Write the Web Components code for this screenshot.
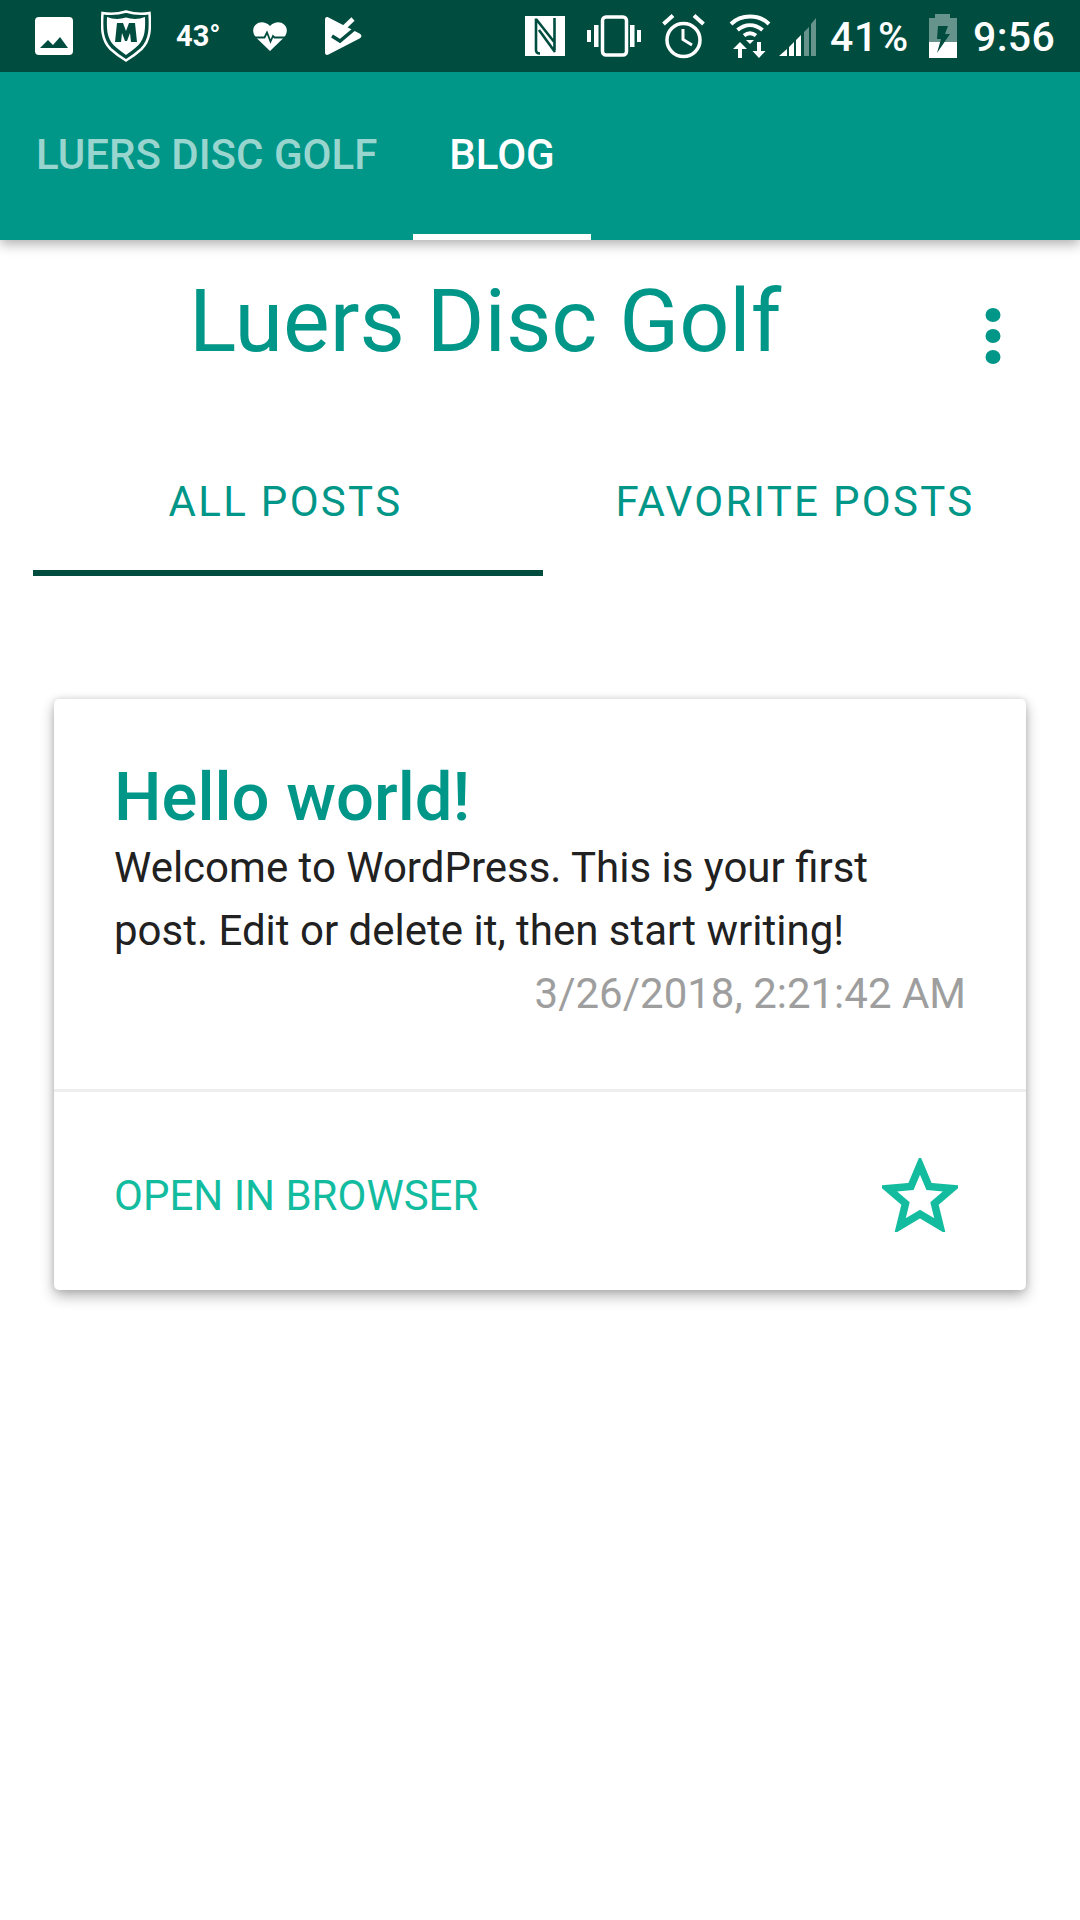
<!DOCTYPE html>
<html><head><meta charset="utf-8">
<style>
html,body{margin:0;padding:0;background:#fff;font-family:Roboto,sans-serif}
body{width:1080px;height:1920px;overflow:hidden;display:flex;flex-direction:column}
</style></head>
<body>
<status-bar></status-bar>
<app-toolbar><toolbar-tab>LUERS DISC GOLF</toolbar-tab><toolbar-tab active>BLOG</toolbar-tab></app-toolbar>
<page-header>Luers Disc Golf</page-header>
<post-tabs><post-tab active>ALL POSTS</post-tab><post-tab>FAVORITE POSTS</post-tab></post-tabs>
<post-card title-text="Hello world!" date="3/26/2018, 2:21:42 AM">Welcome to WordPress. This is your first post. Edit or delete it, then start writing!</post-card>
<script>
function def(name, html){
  customElements.define(name, class extends HTMLElement{
    constructor(){super();this.attachShadow({mode:'open'}).innerHTML=typeof html==='function'?html(this):html;}
  });
}
def('status-bar',`<style>
:host{display:flex;align-items:center;height:72px;background:#004d40;color:#fff;flex:none;font-family:Roboto,sans-serif;position:relative;z-index:2}
svg{display:block;flex:none}
span{display:block;flex:none;line-height:1}
.t1{font-size:29px;font-weight:700;margin-left:25px;width:45px;white-space:nowrap}
.t2{font-size:41px;font-weight:500;margin-left:14px;width:76px;white-space:nowrap;letter-spacing:.6px;padding-top:3px}
.t3{font-size:41px;font-weight:500;margin-left:16px;white-space:nowrap;letter-spacing:.3px;padding-top:3px}
</style>
<svg style="margin-left:35px" width="38" height="38" viewBox="0 0 38 38"><rect width="38" height="38" rx="4" fill="#fff"/><path d="M5 31 13 23l5 5 7-8 8 11z" fill="#004d40"/></svg>
<svg style="margin-left:28px" width="50" height="52" viewBox="0 0 50 52"><path d="M25 1.500C33 4 41 4.500 48.500 3c1 15 1 27-8 36C35 44 30 47.500 25 50.500 20 47.500 15 44 9.500 39c-9-9-9-21-8-36C9 4.500 17 4 25 1.500z" fill="none" stroke="#fff" stroke-width="2.500"/><path d="M25 7.500c6 2 13 2 19-.5 .5 12 0 21-6.500 28C33 39.500 29 42 25 45c-4-3-8-5.500-12.500-10C6 28 5.500 19 6 7c6 2.500 13 2.500 19 .5z" fill="#fff"/><path d="M14 32 16 13h6l3 8 3-8h6l2 19h-6l-1-9-3 8h-2l-3-8-1 9z" fill="#004d40"/></svg>
<span class="t1">43°</span>
<svg style="margin-left:32px" width="34" height="29" viewBox="0 0 34 29"><path d="M17 29 3 15.500C-1 11-.5 5 3 2.500 7-1 13 0 17 4c4-4 10-5 14-1.500 3.500 2.500 4 8.500 0 13z" fill="#fff"/><path d="M0 15.500h11.500l2.500-5 3.500 9 2.500-5.500 1.500 1.500h12.500" fill="none" stroke="#004d40" stroke-width="1.800"/></svg>
<svg style="margin-left:38px" width="37" height="38" viewBox="0 0 37 38"><path d="M0 2.500C0 .5 1.500-.5 3.500.5L34.500 16.500c2.500 1.300 2.500 3.700 0 5L3.500 37.500C1.500 38.500 0 37.500 0 35.500z" fill="#fff"/><path d="M17 12.500 28 2" fill="none" stroke="#fff" stroke-width="4.500"/><path d="M7 19l8 5L30 11.500" fill="none" stroke="#004d40" stroke-width="3.500"/></svg>
<span style="flex:1"></span>
<svg width="40" height="40" viewBox="0 0 40 40"><rect width="40" height="40" fill="#fff"/><path d="M11 2.500V34c0 2.500 1.500 3.500 4 3.500M11 3 30 27M29.500 2V34M14 14 30 36" fill="none" stroke="#004d40" stroke-width="2.600"/></svg>
<svg style="margin-left:22px" width="54" height="42" viewBox="0 0 54 42"><rect x="15.500" y="2" width="24" height="38" rx="3.500" fill="none" stroke="#fff" stroke-width="3.500"/><path d="M7 10h4.500v22H7zM0 15h4v12H0zM43 10h4.500v22H43zM50 15h4v12h-4z" fill="#fff"/></svg>
<svg style="margin-left:21px" width="43" height="46" viewBox="0 0 43 46"><circle cx="21.500" cy="27" r="16.500" fill="none" stroke="#fff" stroke-width="3.500"/><path d="M21 16v10.500l9 5.500" fill="none" stroke="#fff" stroke-width="3"/><path d="M1.500 11 11 2.500M41.500 11 32 2.500" stroke="#fff" stroke-width="4"/></svg>
<svg style="margin-left:24px" width="42" height="44" viewBox="0 0 42 44"><path d="M2 10C12 0 30 0 40 10M8.500 16c8-6.500 17-6.500 25 0M15 21.500c4-3 8-3 12 0" fill="none" stroke="#fff" stroke-width="4"/><path d="M17 26h8l-4 4z" fill="#fff"/><path d="M11 28l7 7h-5v9H9v-9H4zM30 44l-6.500-7H28v-9h4v9h4.500z" fill="#fff"/></svg>
<svg style="margin-left:8px" width="37" height="39" viewBox="0 0 37 39"><path d="M0 39 8 32v7zM10 30l5-5v14h-5zM17 23l5-5v21h-5z" fill="#fff"/><path d="M25 15l5-5v29h-5zM32 7l5-6v38h-5z" fill="#fff" opacity=".4"/></svg>
<span class="t2">41%</span>
<svg style="margin-left:23px" width="28" height="44" viewBox="0 0 28 44"><path d="M6 0h15v4h7v24H0V4h6z" fill="#fff" opacity=".4"/><path d="M0 28h28v16H0z" fill="#fff"/><path d="M9 12h10l-3 8h5L8 39l4-14H8z" fill="#004d40"/></svg>
<span class="t3" style="margin-right:25px">9:56</span>`);

def('toolbar-tab',`<style>
:host{display:flex;align-items:center;height:168px;padding:0 36px 4px;box-sizing:border-box;font:500 42px Roboto,sans-serif;color:#99d5cf;white-space:nowrap;position:relative}
:host([active]){color:#fff}
:host([active])::after{content:"";position:absolute;left:0;right:0;bottom:0;height:6px;background:#fff}
</style><slot></slot>`);
def('app-toolbar',`<style>
:host{display:flex;height:168px;flex:none;background:#009688;box-shadow:0 4px 12px rgba(0,0,0,.32);position:relative;z-index:1}
</style><slot></slot>`);
def('page-header',`<style>
:host{display:flex;flex:none;height:174px;font:400 88px Roboto,sans-serif;color:#009688;align-items:flex-start}
.t{margin-left:189px;line-height:108px;padding-top:27px;white-space:nowrap;flex:1}
svg{display:block;margin:68px 79px 0 0;flex:none}
</style><div class="t"><slot></slot></div>
<svg width="16" height="56" viewBox="0 0 16 56"><ellipse cx="8" cy="7" rx="7.500" ry="7" fill="#009688"/><ellipse cx="8" cy="28" rx="7.500" ry="7" fill="#009688"/><ellipse cx="8" cy="49" rx="7.500" ry="7" fill="#009688"/></svg>`);
def('post-tabs',`<style>
:host{display:flex;flex:none;padding:0 33px;height:162px;box-sizing:border-box}
</style><slot></slot>`);
def('post-tab',`<style>
:host{display:flex;flex:1 1 0;align-items:center;justify-content:center;height:162px;padding-top:18px;box-sizing:border-box;border-bottom:6px solid transparent;font:400 42px Roboto,sans-serif;letter-spacing:2.300px;color:#009688;white-space:nowrap}
:host([active]){border-bottom-color:#004d40;flex:0 0 510px;padding-right:5px}
</style><slot></slot>`);
def('post-card',el=>`<style>
:host{display:block;flex:none;margin:123px 54px 0;height:591px;background:#fff;border-radius:5px;box-shadow:0 6px 14px rgba(0,0,0,.3),0 0 6px rgba(0,0,0,.12);font-family:Roboto,sans-serif}
.top{height:393px;padding:62px 60px 0 60px;box-sizing:border-box;border-bottom:3px solid #eee}
h2{margin:0 0 3px;font:500 67px/72px Roboto,sans-serif;color:#009688}
p{margin:0;font:400 42px/63px Roboto,sans-serif;color:#212121}
.date{font:400 42px/63px Roboto,sans-serif;color:#9e9e9e;text-align:right}
.bottom{display:flex;align-items:center;justify-content:space-between;height:198px;box-sizing:border-box;padding:8px 68px 0 60px}
a{font:400 42px Roboto,sans-serif;color:#14bc9f}
svg{display:block;margin-top:-1px}
</style>
<div class="top"><h2>${el.getAttribute('title-text')||''}</h2><p><slot></slot></p><div class="date">${el.getAttribute('date')||''}</div></div>
<div class="bottom"><a>OPEN IN BROWSER</a><svg width="76" height="74" viewBox="0 0 76 74"><path d="M38 7 47 28.500 70 30.500 52.500 45.500 58 68 38 56 18 68 23.500 45.500 6 30.500 29 28.500z" fill="none" stroke="#14bc9f" stroke-width="7.500"/></svg></div>`);
</script>
</body></html>
